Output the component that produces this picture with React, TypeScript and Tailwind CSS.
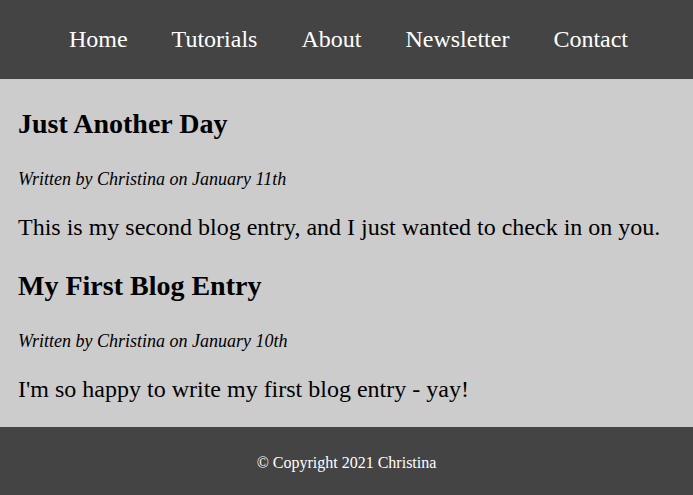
const links = ['Home', 'Tutorials', 'About', 'Newsletter', 'Contact'];

const posts = [
  {
    title: 'Just Another Day',
    meta: 'Written by Christina on January 11th',
    body: 'This is my second blog entry, and I just wanted to check in on you.',
  },
  {
    title: 'My First Blog Entry',
    meta: 'Written by Christina on January 10th',
    body: "I'm so happy to write my first blog entry - yay!",
  },
];

export default function App() {
  return (
    <div className="min-h-screen w-full bg-[#cccccc] text-black font-['Liberation_Serif',serif]">
      {/* nav */}
      <nav className="h-[79px] bg-[#444444] flex items-center justify-center">
        <ul className="flex gap-[44px] pl-[4px]">
          {links.map((l) => (
            <li key={l}>
              <a href="#" className="text-white text-[24px] leading-[28px]">
                {l}
              </a>
            </li>
          ))}
        </ul>
      </nav>

      <main className="px-[18px] pt-[29px] pb-[24px]">
        {posts.map((p, i) => (
          <article key={p.title} className={i > 0 ? 'mt-[29px]' : ''}>
            <h2 className="text-[28px] leading-[32px] font-bold mb-[29px]">{p.title}</h2>
            <p className="italic text-[18px] leading-[21px] mb-[23px]">{p.meta}</p>
            <p className="text-[24px] leading-[28px]">{p.body}</p>
          </article>
        ))}
      </main>

      <footer className="h-[68px] bg-[#444444] flex items-center justify-center pt-[4px]">
        <p className="text-white text-[16px] leading-[18px]">© Copyright 2021 Christina</p>
      </footer>
    </div>
  );
}
